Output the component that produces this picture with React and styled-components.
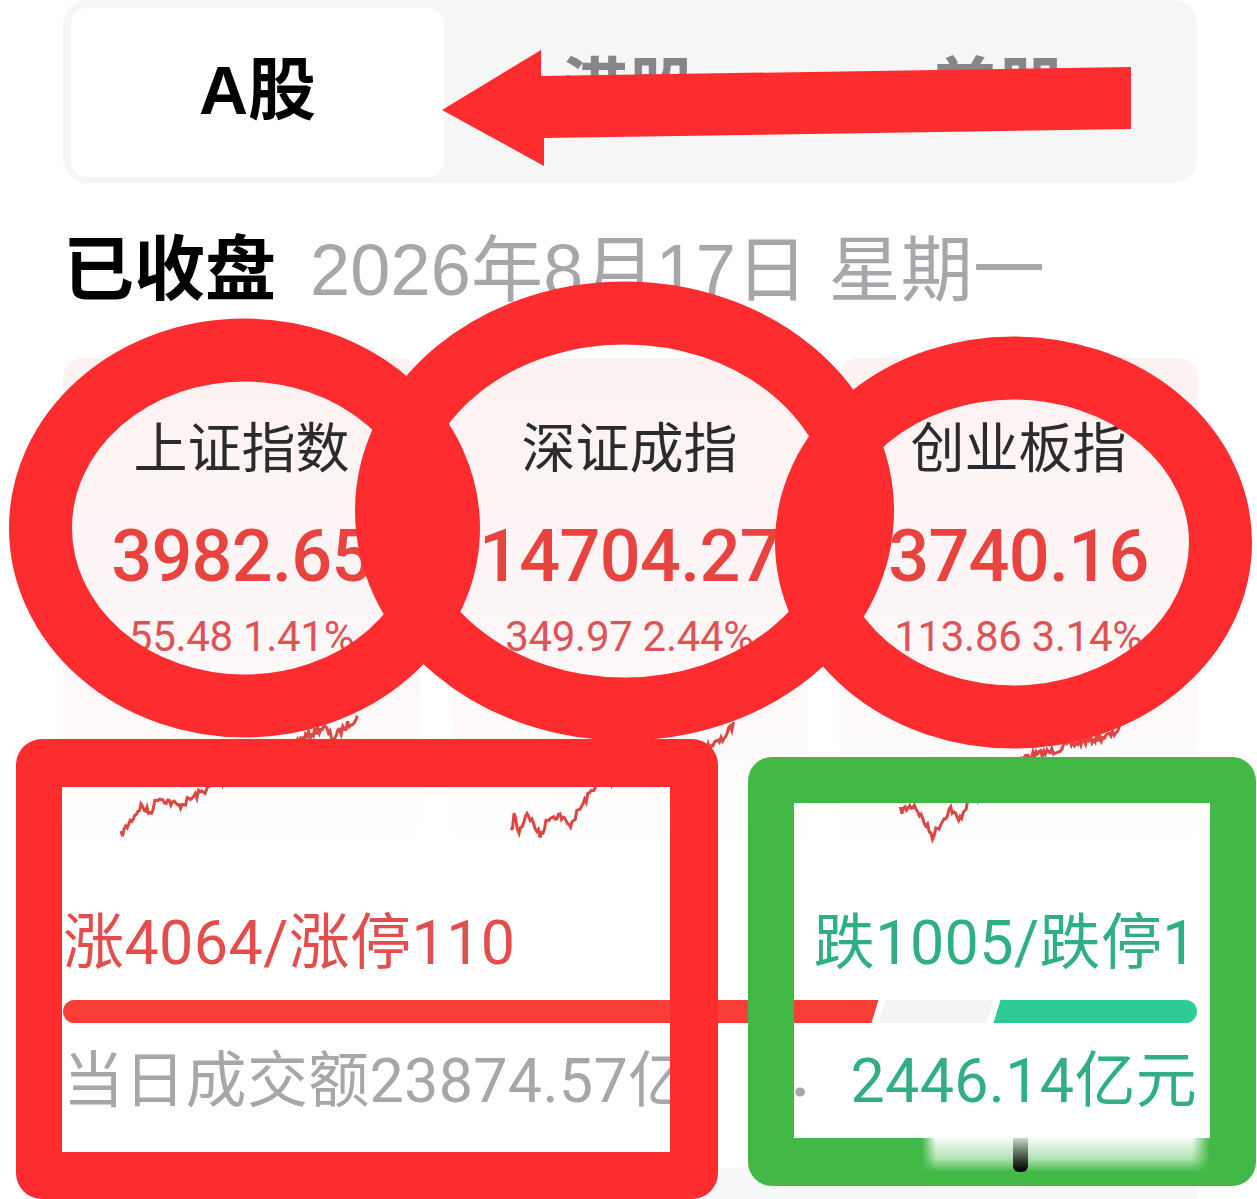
import React from "react";
import styled, { createGlobalStyle } from "styled-components";

const Global = createGlobalStyle`
  html, body { margin: 0; padding: 0; background: #fff; }
  #root { width: 1257px; height: 1199px; overflow: hidden; }
`;

const CJK = `"Liberation Sans", "Noto Sans CJK SC", sans-serif`;
const NUM = `Roboto, "Noto Sans CJK SC", sans-serif`;

const Page = styled.main`
  position: relative;
  box-sizing: border-box;
  width: 1257px;
  height: 1199px;
  overflow: hidden;
  padding: 0 60px 0 63px;
  background: #fff;
  font-family: ${CJK};
`;

const TabBar = styled.nav`
  display: grid;
  grid-template-columns: 373px 370px 370px;
  box-sizing: border-box;
  height: 183px;
  padding: 8px 8px 6px;
  background: #f6f6f7;
  border-radius: 24px;
`;

const Tab = styled.div`
  display: flex;
  align-items: center;
  justify-content: center;
  box-sizing: border-box;
  padding-bottom: 16px;
  border-radius: 16px;
  font-size: 68px;
  font-weight: 700;
  color: ${(p) => (p.$active ? "#000" : "#86868a")};
  background: ${(p) => (p.$active ? "#fff" : "transparent")};
`;

const StatusRow = styled.div`
  display: flex;
  align-items: center;
  gap: 34px;
  height: 90px;
  margin-top: 35px;
`;

const Status = styled.h2`
  margin: 0;
  font-size: 71px;
  font-weight: 700;
  color: #000;
`;

const DateText = styled.span`
  font-size: 72px;
  letter-spacing: 0.2px;
  color: #a6a7ab;
  white-space: pre;
`;

const Cards = styled.section`
  display: grid;
  grid-template-columns: 357px 357px 359px;
  column-gap: 31px;
  margin-top: 50px;
`;

const Card = styled.article`
  display: flex;
  flex-direction: column;
  align-items: center;
  height: 495px;
  border-radius: 20px;
  background: linear-gradient(180deg, #fdf2f2 0%, #fdf6f6 50%, #ffffff 100%);
`;

const CardTitle = styled.div`
  margin-top: 54px;
  line-height: 74px;
  font-size: 54px;
  color: #2b2b2e;
`;

const CardValue = styled.div`
  margin-top: 29px;
  line-height: 84px;
  font-family: ${NUM};
  font-size: 72px;
  font-weight: 500;
  letter-spacing: -0.7px;
  color: #e8433f;
`;

const CardDelta = styled.div`
  margin-top: 13px;
  line-height: 50px;
  font-family: ${NUM};
  font-size: 42px;
  letter-spacing: -0.3px;
  color: #dd5356;
  white-space: pre;
`;

const Spark = styled.svg`
  display: block;
  flex: none;
  margin-top: 33px;
  width: 100%;
  height: 150px;
`;

const Breadth = styled.div`
  display: flex;
  justify-content: space-between;
  align-items: center;
  margin-top: 49px;
  height: 70px;
  font-family: ${NUM};
  font-size: 61px;
  letter-spacing: 0.4px;
`;

const Rise = styled.span`color: #e34e4c;`;
const Fall = styled.span`color: #2fae88;`;

const Bar = styled.div`
  display: flex;
  height: 23px;
  margin-top: 28px;
  gap: 7px;
  border-radius: 12px;
  overflow: hidden;
`;

const BarSeg = styled.div`
  flex: 0 0 ${(p) => p.$width}px;
  background: ${(p) => p.$color};
  transform: skewX(-17deg);
  margin: ${(p) => p.$margin || "0"};
`;

const Amounts = styled.div`
  display: flex;
  justify-content: space-between;
  align-items: center;
  margin-top: 17px;
  height: 70px;
  font-family: ${NUM};
  font-size: 61px;
  letter-spacing: 0.3px;
`;

const Turnover = styled.span`
  color: #a6a7ab;
  white-space: nowrap;
`;

const Change = styled.span`
  display: flex;
  align-items: center;
  gap: 41px;
`;

const Dot = styled.span`
  color: #a6a7ab;
  font-weight: 700;
`;

const Footer = styled.div`
  position: absolute;
  left: 63px;
  right: 60px;
  bottom: 0;
  height: 31px;
  background: #f7f8fa;
  border-radius: 20px 20px 0 0;
`;

const Annotations = styled.svg`
  position: absolute;
  left: 0;
  top: 0;
  width: 1257px;
  height: 1199px;
  pointer-events: none;
`;

const RedBox = styled.div`
  position: absolute;
  left: 16px;
  top: 739px;
  width: 702px;
  height: 460px;
  box-sizing: border-box;
  border: solid #fd2d2f;
  border-width: 48px 48px 47px 46px;
  border-radius: 26px;
`;

const GreenBox = styled.div`
  position: absolute;
  left: 748px;
  top: 757px;
  width: 508px;
  height: 429px;
  box-sizing: border-box;
  border: solid #42b945;
  border-width: 46px 46px 48px 46px;
  border-radius: 24px;
`;

const Watermark = styled.div`
  position: absolute;
  left: 922px;
  top: 1138px;
  width: 288px;
  height: 34px;
  background: linear-gradient(180deg, rgba(255,255,255,.96) 0%, rgba(255,255,255,.6) 60%, rgba(255,255,255,0) 100%);
  -webkit-mask-image: linear-gradient(90deg, transparent 0, #000 14px, #000 270px, transparent 100%);
  mask-image: linear-gradient(90deg, transparent 0, #000 14px, #000 270px, transparent 100%);
`;

const WatermarkMark = styled.div`
  position: absolute;
  left: 1013px;
  top: 1138px;
  width: 15px;
  height: 34px;
  border-radius: 0 0 6px 6px;
  background: linear-gradient(180deg, rgba(90,110,90,.25), #0c0c0c 92%);
`;

function jitter(keys, ox, oy) {
  let seed = 7;
  const rnd = () => {
    seed = (seed * 16807) % 2147483647;
    return seed / 2147483647 - 0.5;
  };
  const pts = [];
  for (let i = 0; i < keys.length - 1; i++) {
    const [x0, y0] = keys[i];
    const [x1, y1] = keys[i + 1];
    const n = Math.max(2, Math.round((x1 - x0) / 1.6));
    for (let k = 0; k < n; k++) {
      const t = k / n;
      pts.push(`${(x0 + (x1 - x0) * t - ox).toFixed(1)},${(y0 + (y1 - y0) * t + rnd() * 8 - oy).toFixed(1)}`);
    }
  }
  return pts.join(" ");
}

const sparks = [
  { ox: 63, keys: [[121,835],[141,806],[150,813],[158,797],[179,806],[210,787],[240,775],[304,738],[324,727],[333,738],[359,715]] },
  { ox: 451, keys: [[511,834],[514,815],[519,833],[527,812],[540,836],[549,817],[560,815],[569,826],[594,787],[650,770],[700,750],[721,741],[735,723]] },
  { ox: 838, keys: [[899,811],[913,805],[931,836],[949,808],[957,821],[966,803],[1000,780],[1023,757],[1048,752],[1066,745],[1110,735],[1121,723]] },
];

const cards = [
  { title: "上证指数", value: "3982.65", delta: "55.48 1.41%" },
  { title: "深证成指", value: "14704.27", delta: "349.97 2.44%" },
  { title: "创业板指", value: "3740.16", delta: "113.86 3.14%" },
];

export default function App() {
  return (
    <>
      <Global />
      <Page>
        <Footer />
        <TabBar>
          <Tab $active>A股</Tab>
          <Tab>港股</Tab>
          <Tab>美股</Tab>
        </TabBar>
        <StatusRow>
          <Status>已收盘</Status>
          <DateText>2026年8月17日 星期一</DateText>
        </StatusRow>
        <Cards>
          {cards.map((c, i) => (
            <Card key={c.title}>
              <CardTitle>{c.title}</CardTitle>
              <CardValue>{c.value}</CardValue>
              <CardDelta>{c.delta}</CardDelta>
              <Spark viewBox="0 0 357 150" preserveAspectRatio="none">
                <polyline
                  points={jitter(sparks[i].keys, sparks[i].ox, 695)}
                  fill="none"
                  stroke="#dc4643"
                  strokeWidth="3"
                />
              </Spark>
            </Card>
          ))}
        </Cards>
        <Breadth>
          <Rise>涨4064/涨停110</Rise>
          <Fall>跌1005/跌停1</Fall>
        </Breadth>
        <Bar>
          <BarSeg $width={824} $color="#f93e3a" $margin="0 0 0 -12px" />
          <BarSeg $width={108} $color="#f2f3f5" />
          <BarSeg $width={212} $color="#2dcb95" $margin="0 -12px 0 0" />
        </Bar>
        <Amounts>
          <Turnover>当日成交额23874.57亿</Turnover>
          <Change>
            <Dot>.</Dot>
            <Fall>2446.14亿元</Fall>
          </Change>
        </Amounts>
        <Annotations viewBox="0 0 1257 1199">
          <g fill="none" stroke="#fd2d2f" strokeWidth="63">
            <ellipse cx="244.5" cy="528" rx="204" ry="178" />
            <ellipse cx="624.5" cy="511" rx="238" ry="198" />
            <ellipse cx="1013.5" cy="542.5" rx="207" ry="174.5" />
          </g>
          <polygon fill="#fd2d2f" points="442,110 541,50 541,76 1131,67 1131,129 544,138 544,166" />
        </Annotations>
        <RedBox />
        <GreenBox />
        <Watermark />
        <WatermarkMark />
      </Page>
    </>
  );
}
